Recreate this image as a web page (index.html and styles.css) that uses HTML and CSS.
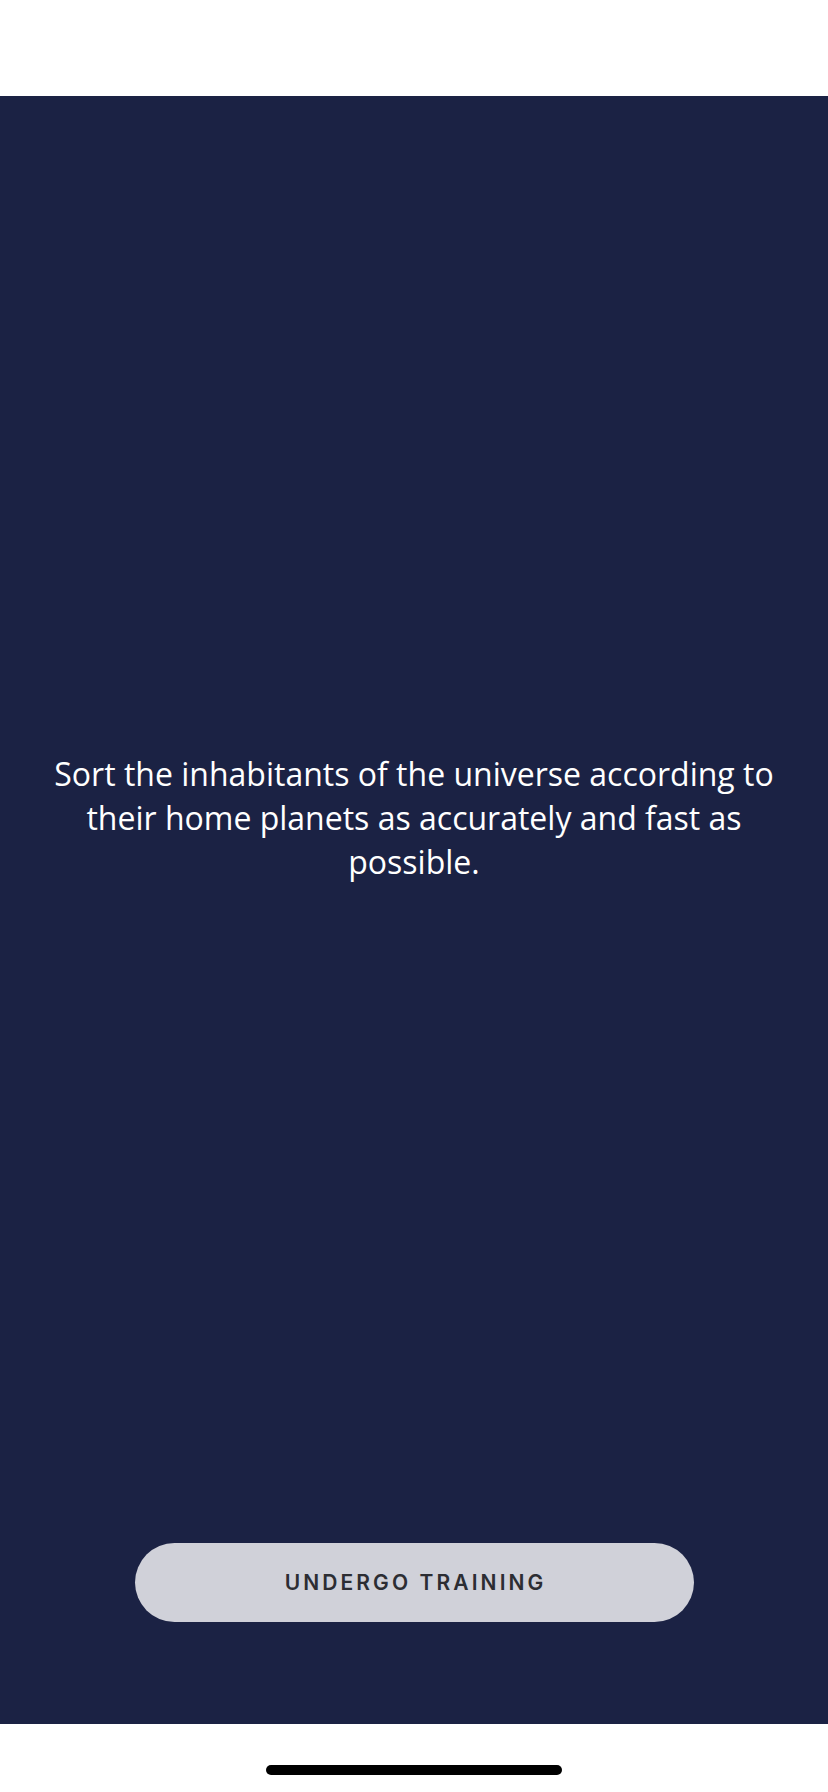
FILE: index.html
```html
<!DOCTYPE html>
<html lang="en">
<head>
<meta charset="utf-8">
<link rel="stylesheet" href="styles.css">
</head>
<body>
<div class="screen">
  <div class="status-bar"></div>
  <main class="content">
    <p class="intro">Sort the inhabitants of the universe according to their home planets as accurately and fast as possible.</p>
    <button class="cta">UNDERGO TRAINING</button>
  </main>
  <div class="home-area"><div class="home-indicator"></div></div>
</div>
</body>
</html>
```
FILE: styles.css
```css
html, body {
  margin: 0;
  padding: 0;
  background: #ffffff;
}
.screen {
  width: 828px;
  height: 1792px;
  display: flex;
  flex-direction: column;
}
.status-bar {
  height: 96px;
  background: #ffffff;
}
.content {
  flex: 1;
  background: #1b2244;
  display: flex;
  flex-direction: column;
  align-items: center;
  padding: 656px 40px 102px;
  box-sizing: border-box;
}
.intro {
  margin: 0;
  color: #ffffff;
  font-family: "Open Sans", sans-serif;
  font-size: 32px;
  line-height: 44px;
  text-align: center;
}
.cta {
  margin-top: auto;
  width: 559px;
  height: 79px;
  border: none;
  border-radius: 40px;
  background: #d0d1d9;
  color: #2c2d33;
  font-family: Inter, sans-serif;
  font-weight: 600;
  font-size: 21px;
  letter-spacing: 3.1px;
  padding: 0 0 0 3.1px;
}
.home-area {
  height: 68px;
  display: flex;
  justify-content: center;
  align-items: flex-start;
}
.home-indicator {
  margin-top: 41px;
  width: 296px;
  height: 10px;
  border-radius: 5px;
  background: #000000;
}
```
